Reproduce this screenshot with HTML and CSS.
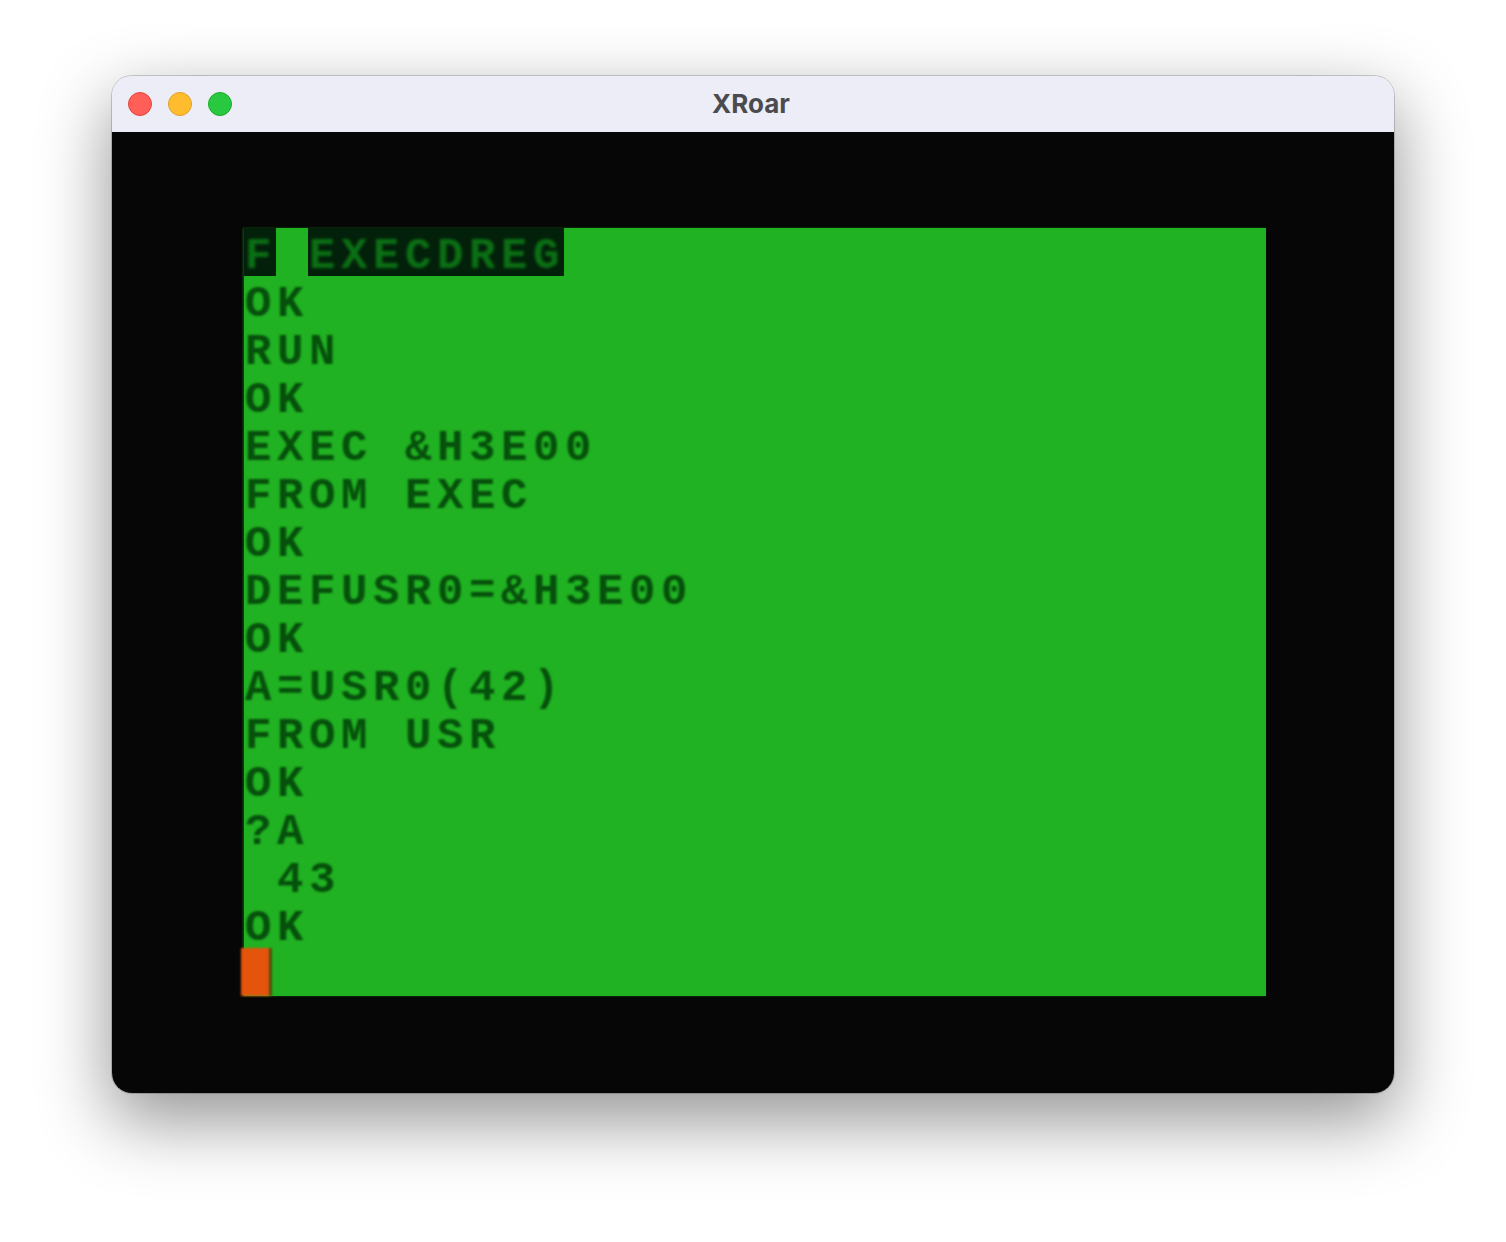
FILE: index.html
```html
<!DOCTYPE html>
<html lang="en">
<head>
<meta charset="utf-8">
<title>XRoar</title>
<link rel="stylesheet" href="styles.css">
</head>
<body>
<main class="window">
  <header class="titlebar">
    <div class="lights">
      <span class="light red"></span>
      <span class="light yellow"></span>
      <span class="light green"></span>
    </div>
    <h1 class="title">XRoar</h1>
  </header>
  <section class="screen">
    <div class="vdg">
      <div class="row"><span class="inv"><span class="inv-text">F</span></span><span class="gap"></span><span class="inv"><span class="inv-text">EXECDREG</span></span></div>
      <div class="row"><span class="txt">OK</span></div>
      <div class="row"><span class="txt">RUN</span></div>
      <div class="row"><span class="txt">OK</span></div>
      <div class="row"><span class="txt">EXEC &amp;H3E00</span></div>
      <div class="row"><span class="txt">FROM EXEC</span></div>
      <div class="row"><span class="txt">OK</span></div>
      <div class="row"><span class="txt">DEFUSR0=&amp;H3E00</span></div>
      <div class="row"><span class="txt">OK</span></div>
      <div class="row"><span class="txt">A=USR0(42)</span></div>
      <div class="row"><span class="txt">FROM USR</span></div>
      <div class="row"><span class="txt">OK</span></div>
      <div class="row"><span class="txt">?A</span></div>
      <div class="row"><span class="txt"> 43</span></div>
      <div class="row"><span class="txt">OK</span></div>
      <div class="row"><span class="cursor"></span></div>
    </div>
  </section>
</main>
</body>
</html>
```
FILE: styles.css
```css
* { box-sizing: border-box; }
html, body { margin: 0; height: 100%; background: #fff; overflow: hidden; }
body { padding: 76px 112px 0; }
.window {
  width: 1282px;
  height: 1017px;
  border-radius: 20px;
  overflow: hidden;
  display: flex;
  flex-direction: column;
  box-shadow: 0 0 0 1px rgba(0,0,0,.18), 0 26px 70px 2px rgba(0,0,0,.42);
}
.titlebar {
  height: 56px;
  flex: none;
  background: #ecedf6;
  display: flex;
  align-items: center;
  justify-content: center;
  position: relative;
}
.lights { position: absolute; left: 16px; top: 16px; display: flex; gap: 16px; }
.light { width: 24px; height: 24px; border-radius: 50%; border: 1px solid; }
.red { background: #ff5f57; border-color: #e2463f; }
.yellow { background: #febc2e; border-color: #e1a126; }
.green { background: #28c840; border-color: #1aab29; }
.title {
  margin: 0;
  font: 700 26px/1 Inter, "Liberation Sans", sans-serif;
  color: #4a4a4f;
  transform: translateX(-2px);
}
.screen {
  flex: 1;
  background: #060606;
  padding: 96px 128px 97px 132px;
}
.vdg { width: 1022px; height: 768px; background: #20b222; box-shadow: -1px 0 2px #0e5a12; }
.row {
  height: 48px;
  display: flex;
  font: 700 44px/40px "Liberation Mono", monospace;
  letter-spacing: 5.6px;
  white-space: pre;
}
.txt { display: block; height: 48px; padding: 8px 0 0 1px; color: #06500c; filter: blur(1.1px); }
.inv { display: block; height: 48px; padding-top: 8px; background: #03200a; color: #0b7014; }
.inv-text { display: block; transform: translateX(1px); filter: blur(1.4px); }
.gap { width: 32px; }
.cursor { width: 31px; height: 48px; margin-left: -3px; background: #e4540c; border-right: 3px solid #4f4f0c; filter: blur(1px); }
```
